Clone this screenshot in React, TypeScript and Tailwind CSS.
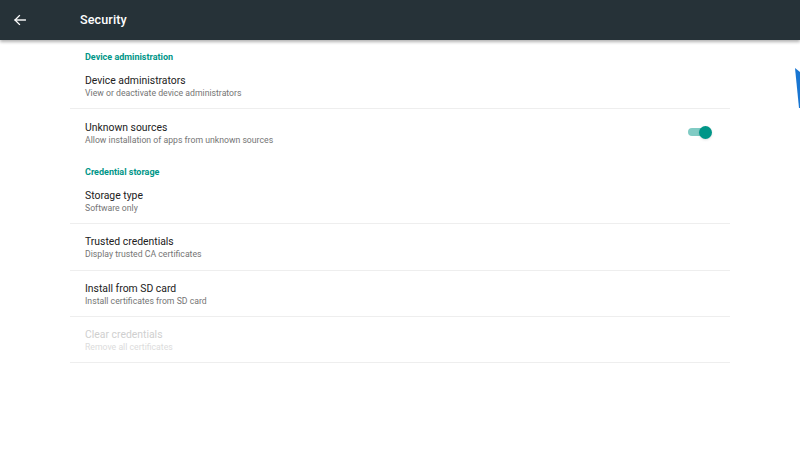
import React from 'react';

type Row = {
  title: string;
  summary: string;
  divider?: boolean;
  disabled?: boolean;
  toggle?: boolean;
};

const sections: { header: string; rows: Row[] }[] = [
  {
    header: 'Device administration',
    rows: [
      { title: 'Device administrators', summary: 'View or deactivate device administrators', divider: true },
      { title: 'Unknown sources', summary: 'Allow installation of apps from unknown sources', toggle: true },
    ],
  },
  {
    header: 'Credential storage',
    rows: [
      { title: 'Storage type', summary: 'Software only', divider: true },
      { title: 'Trusted credentials', summary: 'Display trusted CA certificates', divider: true },
      { title: 'Install from SD card', summary: 'Install certificates from SD card', divider: true },
      { title: 'Clear credentials', summary: 'Remove all certificates', divider: true, disabled: true },
    ],
  },
];

const Toggle = () => (
  <div className="relative w-[24px] h-[14px] flex items-center">
    <div className="w-[22px] h-[8px] rounded-full bg-[#80cbc4]" />
    <div className="absolute right-0 w-[13px] h-[13px] rounded-full bg-[#009688] shadow-sm" />
  </div>
);

export default function App() {
  return (
    <div className="relative w-[800px] h-[450px] bg-white overflow-hidden" style={{ fontFamily: 'Roboto, "Liberation Sans", sans-serif' }}>
      {/* Toolbar */}
      <header className="relative z-10 h-[40px] bg-[#263238] flex items-center shadow-[0_2px_3px_rgba(0,0,0,0.3)]">
        <div className="w-[80px] pl-[13px] flex items-center">
          <svg width="14" height="14" viewBox="0 0 24 24" fill="none" stroke="white" strokeWidth="2.4" strokeLinecap="square">
            <path d="M21 12H4" />
            <path d="M11 4.5 3.5 12l7.5 7.5" />
          </svg>
        </div>
        <span className="text-white text-[12.6px] font-medium tracking-[0.1px]">Security</span>
      </header>

      {/* Preference list */}
      <div className="mx-[70px]">
        {sections.map((section) => (
          <div key={section.header}>
            <div className="h-[22.5px] pt-[12px] pl-[15px] text-[9px] leading-[10px] font-bold text-[#009688]">
              {section.header}
            </div>
            {section.rows.map((row) => (
              <div
                key={row.title}
                className={`h-[46.4px] pl-[15px] pr-[18px] flex items-center justify-between ${
                  row.divider ? 'border-b border-[#eeeeee]' : ''
                }`}
              >
                <div className="flex flex-col pt-[3px]">
                  <span className={`text-[10.4px] leading-[13px] ${row.disabled ? 'text-[#cfcfcf]' : 'text-[#212121]'}`}>
                    {row.title}
                  </span>
                  <span className={`text-[8.7px] leading-[13px] ${row.disabled ? 'text-[#dcdcdc]' : 'text-[#757575]'}`}>
                    {row.summary}
                  </span>
                </div>
                {row.toggle && <Toggle />}
              </div>
            ))}
          </div>
        ))}
      </div>

      {/* Blue sliver at right edge */}
      <svg className="absolute left-[794px] top-[68px]" width="6" height="40" viewBox="0 0 6 40">
        <path d="M1 0 L6 4 L6 40 L5 40 Z" fill="#1976d2" />
      </svg>
    </div>
  );
}
